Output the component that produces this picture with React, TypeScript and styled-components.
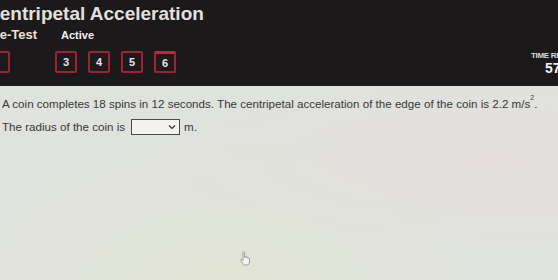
import React, { FC } from 'react';
import styled, { createGlobalStyle } from 'styled-components';

const GlobalStyle = createGlobalStyle`
  html, body {
    margin: 0;
    padding: 0;
    width: 558px;
    height: 280px;
    overflow: hidden;
    font-family: 'Liberation Sans', Arial, sans-serif;
  }
`;

const Page = styled.div`
  position: relative;
  width: 558px;
  height: 280px;
  display: flex;
  flex-direction: column;
  overflow: hidden;
  background: #e1e3df;
`;

const Header = styled.header`
  height: 86px;
  flex-shrink: 0;
  background: #1c191a;
  display: flex;
  justify-content: space-between;
  overflow: hidden;
`;

const HeaderLeft = styled.div`
  display: flex;
  flex-direction: column;
  margin-left: -14px;
`;

const Title = styled.h1`
  margin: 2px 0 0;
  font-size: 19px;
  font-weight: 700;
  line-height: 24px;
  color: #e2e0df;
  white-space: nowrap;
`;

const Tabs = styled.div`
  display: flex;
  align-items: baseline;
  gap: 24px;
  margin-top: 1px;
  height: 16px;
`;

interface TabProps {
  current?: boolean;
}

const Tab = styled.span<TabProps>`
  font-weight: 700;
  font-size: ${(p: TabProps) => (p.current ? '13px' : '11px')};
  color: ${(p: TabProps) => (p.current ? '#eee2d7' : '#f2f2f2')};
`;

const Questions = styled.div`
  display: flex;
  gap: 11px;
  margin-top: 8px;
  margin-left: 2px;
`;

interface BoxProps {
  marked?: boolean;
  wide?: boolean;
}

const QBox = styled.div<BoxProps>`
  width: 22px;
  height: 22px;
  box-sizing: border-box;
  border: 2px solid #9c2236;
  border-top: ${(p: BoxProps) => (p.marked ? '3px solid #c5253c' : '2px solid #9c2236')};
  border-radius: 2px;
  margin-right: ${(p: BoxProps) => (p.wide ? '34px' : '0')};
  display: flex;
  align-items: center;
  justify-content: ${(p: BoxProps) => (p.wide ? 'flex-start' : 'center')};
  padding-left: ${(p: BoxProps) => (p.wide ? '3px' : '0')};
  font-size: 11px;
  font-weight: 700;
  color: #e6e6e6;
  background: #1e1a1b;
`;

const Timer = styled.div`
  width: 27px;
  margin-top: 51px;
  display: flex;
  flex-direction: column;
  white-space: nowrap;
`;

const TimerLabel = styled.span`
  font-size: 8px;
  font-weight: 700;
  letter-spacing: -0.3px;
  color: #dcdcdc;
  line-height: 9px;
`;

const TimerValue = styled.span`
  font-size: 14px;
  font-weight: 700;
  color: #f0f0f0;
  line-height: 16px;
  padding-left: 14px;
`;

const Content = styled.main`
  flex: 1;
  padding: 10px 2px 0;
  color: #383838;
  font-size: 11.6px;
  background:
    radial-gradient(ellipse at 40% 110%, rgba(225, 230, 205, 0.6), transparent 60%),
    radial-gradient(ellipse at 90% 40%, rgba(232, 218, 222, 0.5), transparent 50%),
    #e0e2de;
`;

const Line = styled.p`
  margin: 0 0 7px;
  line-height: 16px;
  display: flex;
  align-items: center;
  white-space: nowrap;
`;

const Sup = styled.sup`
  font-size: 7px;
  line-height: 0;
  align-self: flex-start;
  margin-top: 2px;
`;

const Select = styled.span`
  display: inline-flex;
  align-items: center;
  justify-content: flex-end;
  box-sizing: border-box;
  width: 49px;
  height: 16px;
  margin: 0 4px 0 6px;
  padding-right: 3px;
  border: 1px solid #4a4a4a;
  background: #f2f3f1;
`;

const Pointer = styled.div`
  position: absolute;
  left: 240px;
  top: 251px;
`;

const Chevron: FC = () => (
  <svg width="8" height="6" viewBox="0 0 8 6">
    <path d="M1 1.5 L4 4.5 L7 1.5" fill="none" stroke="#333" strokeWidth="1.2" />
  </svg>
);

const HandCursor: FC = () => (
  <svg width="12" height="15" viewBox="0 0 12 15">
    <path
      d="M3 1.5 C3 0.6 4.6 0.6 4.6 1.5 L4.6 6.5 L5 6 C5 5.2 6.5 5.2 6.5 6 L6.5 6.8 C6.6 6.2 8 6.2 8 7 L8 7.6 C8.2 7 9.5 7.1 9.5 7.9 L9.5 11 C9.5 12.8 8.5 14 7 14 L5 14 C3.8 14 3.2 13.2 2.4 12 L0.8 9.4 C0.4 8.6 1.4 8 2 8.6 L3 9.6 Z"
      fill="#f4f4f4"
      stroke="#8a8a8a"
      strokeWidth="0.8"
    />
  </svg>
);

const App: FC = () => {
  const numbers = [3, 4, 5, 6];

  return (
    <Page>
      <GlobalStyle />
      <Header>
        <HeaderLeft>
          <Title>Centripetal Acceleration</Title>
          <Tabs>
            <Tab current>Pre-Test</Tab>
            <Tab>Active</Tab>
          </Tabs>
          <Questions>
            <QBox wide>2</QBox>
            {numbers.map(n => (
              <QBox key={n} marked={n === 6}>
                {n}
              </QBox>
            ))}
          </Questions>
        </HeaderLeft>
        <Timer>
          <TimerLabel>TIME REMAINING</TimerLabel>
          <TimerValue>57:14</TimerValue>
        </Timer>
      </Header>
      <Content>
        <Line>
          A coin completes 18 spins in 12 seconds. The centripetal acceleration of the edge of the coin is 2.2&nbsp;m/s
          <Sup>2</Sup>.
        </Line>
        <Line>
          The radius of the coin is
          <Select>
            <Chevron />
          </Select>
          m.
        </Line>
      </Content>
      <Pointer>
        <HandCursor />
      </Pointer>
    </Page>
  );
};

export default App;
